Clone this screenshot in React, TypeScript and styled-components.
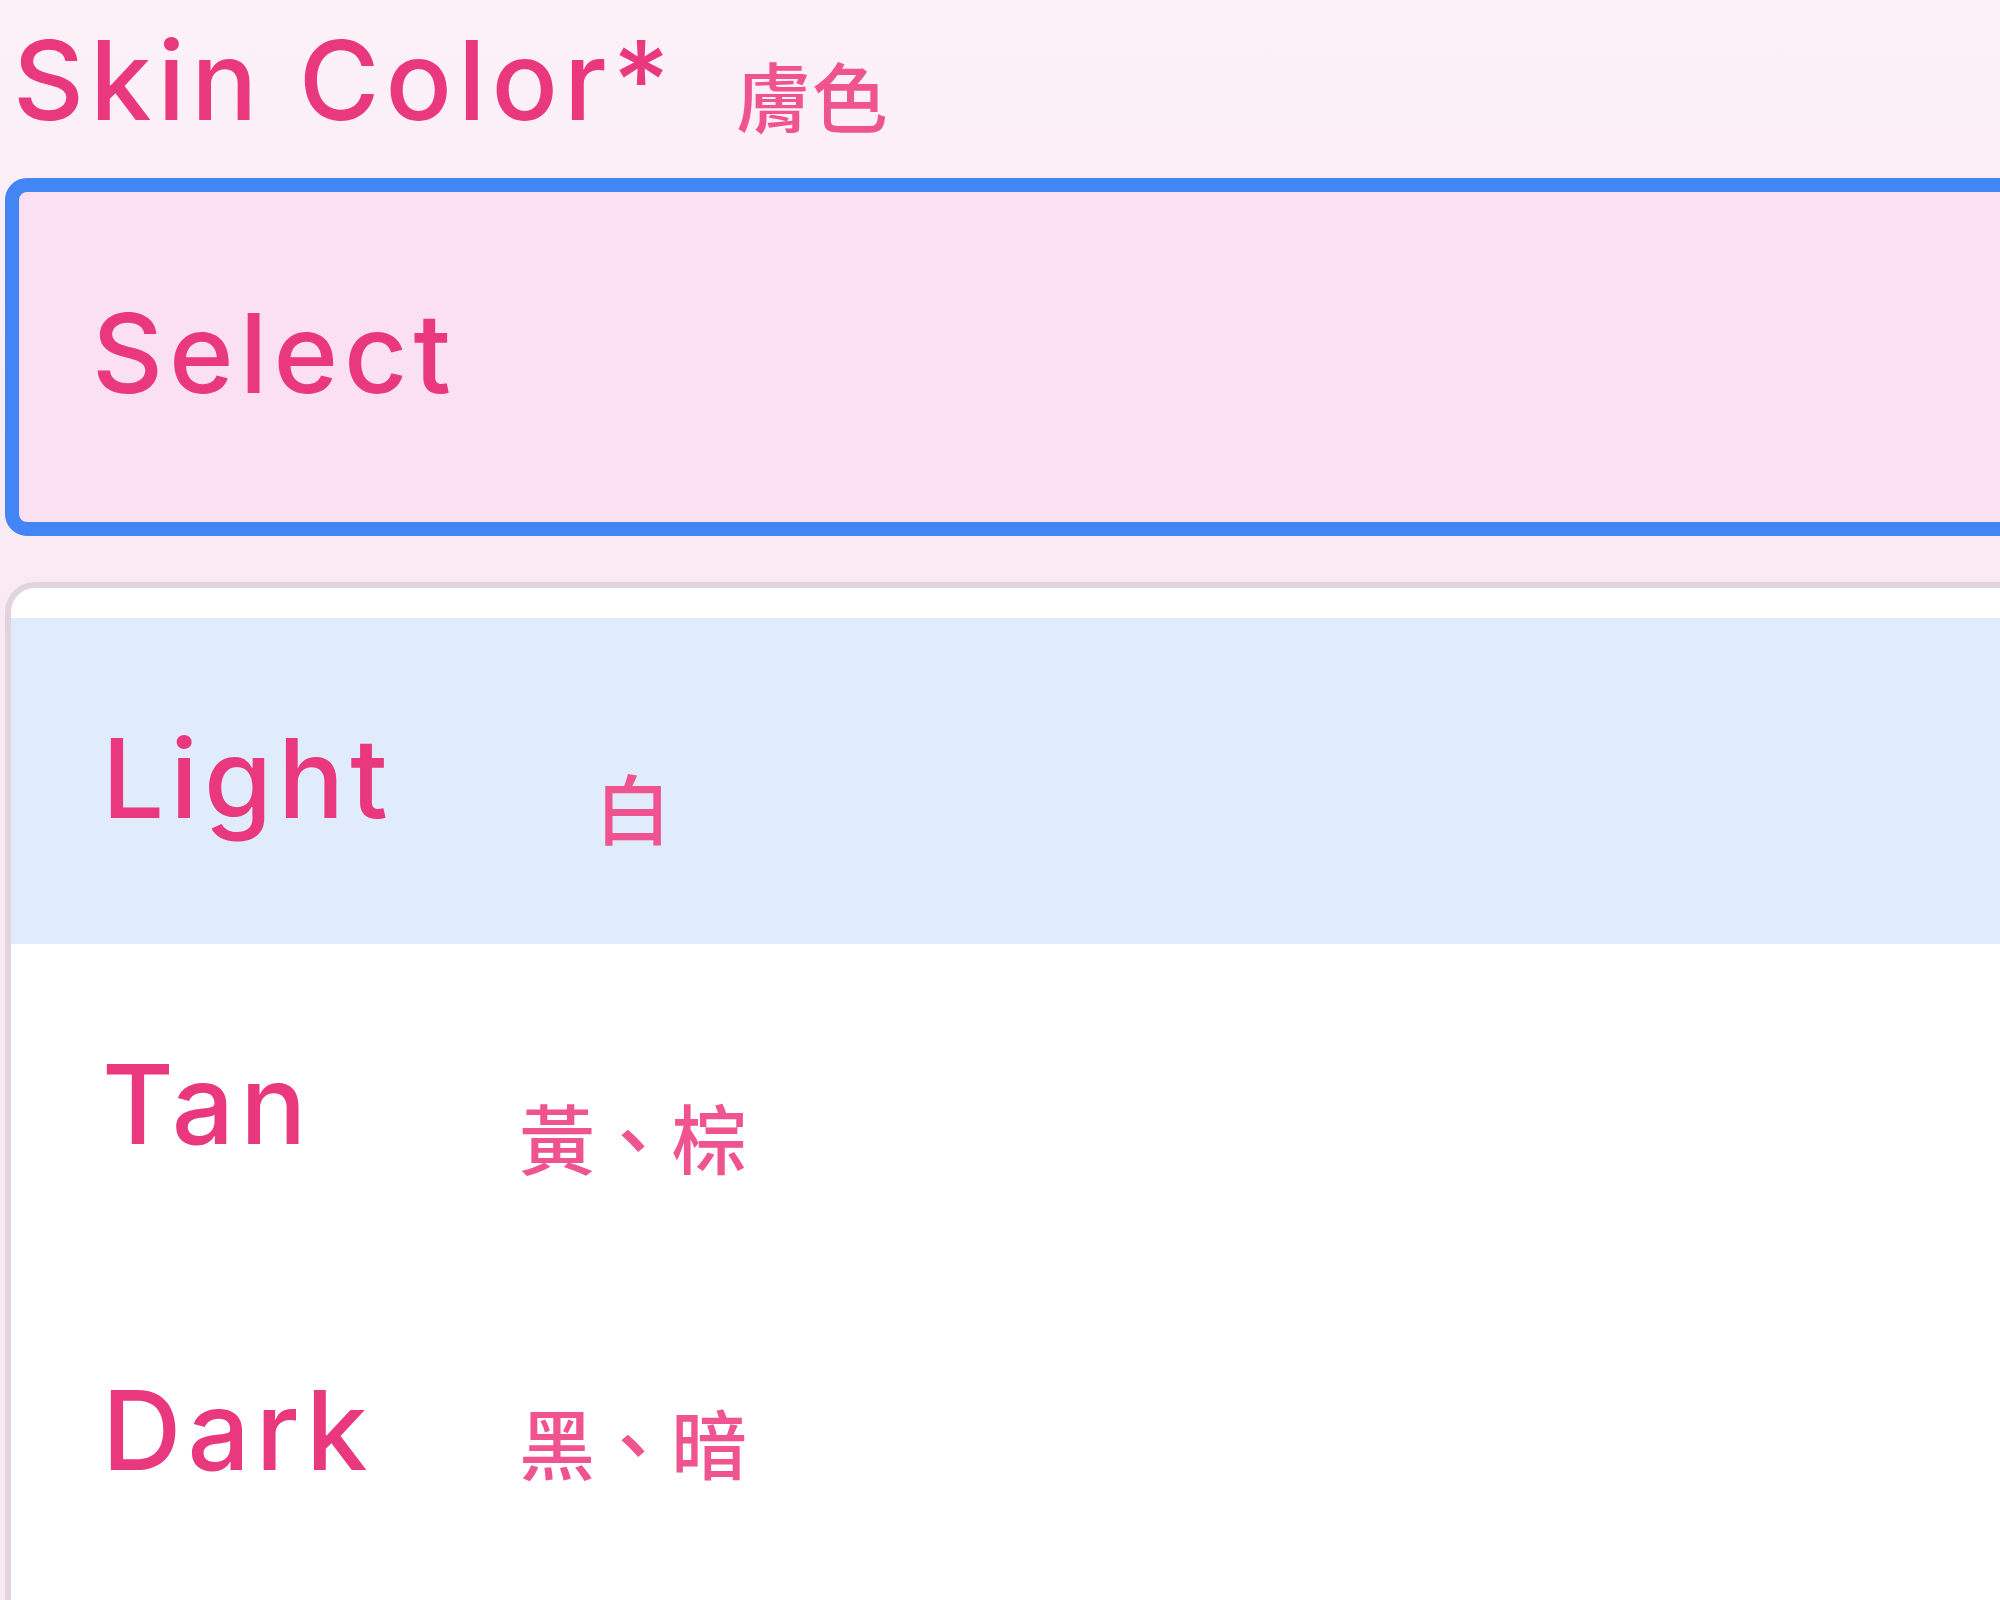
import styled, { createGlobalStyle } from 'styled-components';

const GlobalStyle = createGlobalStyle`
  html, body {
    margin: 0;
    padding: 0;
  }
  body {
    background: linear-gradient(180deg, #fdf1f8 0%, #f8e9f2 40%, #f8e9f2 100%);
    font-family: Inter, "Noto Sans", "Noto Sans CJK TC", sans-serif;
  }
`;

const pink = '#e9387d';
const pinkSoft = '#ef5390';

const Page = styled.div`
  width: 2000px;
  height: 1600px;
  overflow: hidden;
  padding: 25px 0 0 5px;
  box-sizing: border-box;
`;

const Field = styled.div`
  width: 2100px;
  display: flex;
  flex-direction: column;
`;

const LabelRow = styled.div`
  display: flex;
  align-items: flex-start;
  padding-left: 8px;
`;

const Label = styled.span`
  font-family: Inter, "Noto Sans", sans-serif;
  font-size: 110px;
  line-height: 110px;
  font-weight: 450;
  letter-spacing: 6px;
  color: ${pink};
  white-space: nowrap;
`;

const Zh = styled.span<{ $drop?: number }>`
  font-family: "Noto Sans CJK TC", "Noto Sans CJK SC", sans-serif;
  font-size: 76px;
  line-height: 76px;
  font-weight: 500;
  color: ${pinkSoft};
  margin-top: ${(p) => p.$drop ?? 0}px;
  white-space: nowrap;
`;

const LabelZh = styled(Zh)`
  margin-left: 60px;
`;

const SelectBox = styled.div`
  margin-top: 43px;
  height: 358px;
  box-sizing: border-box;
  border: 14px solid #4285f4;
  border-radius: 22px;
  background: #fbe0f2;
  padding: 106px 0 0 73px;
`;

const Placeholder = styled(Label)``;

const Menu = styled.div`
  margin-top: 46px;
  height: 1100px;
  box-sizing: border-box;
  border: 6px solid #e2d4dc;
  border-radius: 30px;
  background: #ffffff;
  padding-top: 30px;
`;

const Option = styled.div<{ $active?: boolean }>`
  height: 326px;
  box-sizing: border-box;
  display: grid;
  grid-template-columns: 366px 330px 1fr;
  align-items: start;
  padding: 105px 0 0 91px;
  background: ${(p) => (p.$active ? '#e0ebfc' : 'transparent')};
`;

const OptionZh = styled(Zh)`
  text-align: center;
`;

const options = [
  { en: 'Light', zh: '白', drop: 45, active: true },
  { en: 'Tan', zh: '黃、棕', drop: 49 },
  { en: 'Dark', zh: '黑、暗', drop: 28 },
];

export default function App() {
  return (
    <>
      <GlobalStyle />
      <Page>
        <Field>
          <LabelRow>
            <Label>Skin Color*</Label>
            <LabelZh $drop={31}>膚色</LabelZh>
          </LabelRow>
          <SelectBox>
            <Placeholder>Select</Placeholder>
          </SelectBox>
          <Menu role="listbox">
            {options.map((o) => (
              <Option key={o.en} $active={o.active} role="option">
                <Label>{o.en}</Label>
                <OptionZh $drop={o.drop}>{o.zh}</OptionZh>
              </Option>
            ))}
          </Menu>
        </Field>
      </Page>
    </>
  );
}
